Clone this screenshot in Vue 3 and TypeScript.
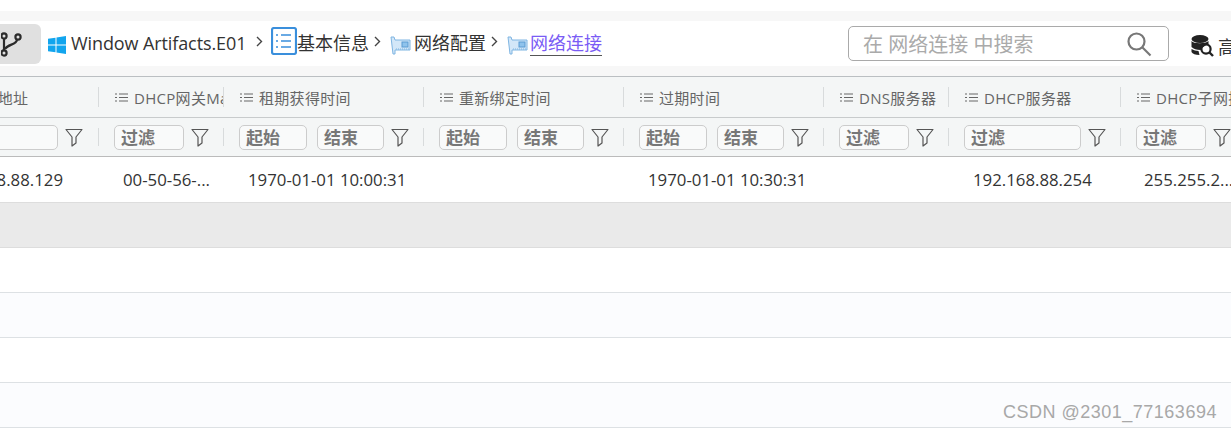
<script setup lang="ts">
type Col = { title: string; width: number; filter: 'text' | 'range' | 'wide'; value: string; pad: number; }

// first column runs off the left edge, the page is scrolled sideways
const columns: Col[] = [
  { title: 'IP地址', width: 198, filter: 'text', value: '192.168.88.129', pad: 0 },
  { title: 'DHCP网关Mac地址', width: 125, filter: 'text', value: '00-50-56-...', pad: 25 },
  { title: '租期获得时间', width: 200, filter: 'range', value: '1970-01-01 10:00:31', pad: 25 },
  { title: '重新绑定时间', width: 200, filter: 'range', value: '', pad: 25 },
  { title: '过期时间', width: 200, filter: 'range', value: '1970-01-01 10:30:31', pad: 25 },
  { title: 'DNS服务器', width: 125, filter: 'text', value: '', pad: 25 },
  { title: 'DHCP服务器', width: 172, filter: 'wide', value: '192.168.88.254', pad: 25 },
  { title: 'DHCP子网掩码', width: 125, filter: 'text', value: '255.255.2...', pad: 24 },
]

const gridStyle = { gridTemplateColumns: columns.map((c) => `${c.width}px`).join(' ') }
const emptyRows = [1, 2, 3, 4, 5]
</script>

<template>
  <div class="page">
    <div class="top-space"></div>
    <div class="toolbar">
      <div class="branch-btn">
        <svg width="24" height="28" viewBox="0 0 24 28" fill="none" stroke="#2b2b2b" stroke-width="2.2">
          <circle cx="3" cy="6" r="2.6" />
          <circle cx="3" cy="23" r="2.6" />
          <circle cx="17" cy="7" r="2.6" />
          <path d="M3 9v11M16 10c-1 5-9 4-12 9" />
        </svg>
      </div>
      <svg class="win" width="18" height="18" viewBox="0 0 18 18" fill="#12a5ee">
        <path d="M0 2.8 7.5 1.7V8.5H0zM8.5 1.6 18 0V8.5H8.5zM0 9.500H7.5V16.3L0 15.2zM8.5 9.500H18V18L8.5 16.4z" />
      </svg>
      <span class="crumb latin">Window Artifacts.E01</span>
      <svg class="chev first-chev" width="7" height="11" viewBox="0 0 7 11" fill="none" stroke="#444" stroke-width="1.4">
        <path d="m1 1 4.500 4.500L1 10" />
      </svg>
      <svg class="list-icon" width="26" height="28" viewBox="0 0 26 28" fill="none" stroke="#3a8fdc">
        <rect x="1" y="1" width="24" height="26" rx="2" stroke-width="2.2" />
        <path d="M10 8h10M10 14h10M10 20h10M5 8h2M5 14h2M5 20h2" stroke-width="1.3" />
      </svg>
      <span class="crumb">基本信息</span>
      <svg class="chev" width="7" height="11" viewBox="0 0 7 11" fill="none" stroke="#444" stroke-width="1.4">
        <path d="m1 1 4.500 4.500L1 10" />
      </svg>
      <svg class="nic first" width="21" height="20" viewBox="0 0 21 20" fill="#d3e7f8" stroke="#7fb5e2">
        <path d="M1 2h3l1 3h15v10H5v4H3z" />
        <rect x="12" y="7" width="6" height="5" fill="#8fc3ec" stroke="#5b9bd2" />
        <path d="M6 14h13" stroke-dasharray="1 1" />
      </svg>
      <span class="crumb">网络配置</span>
      <svg class="chev" width="7" height="11" viewBox="0 0 7 11" fill="none" stroke="#444" stroke-width="1.4">
        <path d="m1 1 4.500 4.500L1 10" />
      </svg>
      <svg class="nic second" width="21" height="20" viewBox="0 0 21 20" fill="#d3e7f8" stroke="#7fb5e2">
        <path d="M1 2h3l1 3h15v10H5v4H3z" />
        <rect x="12" y="7" width="6" height="5" fill="#8fc3ec" stroke="#5b9bd2" />
        <path d="M6 14h13" stroke-dasharray="1 1" />
      </svg>
      <span class="crumb current">网络连接</span>

      <div class="search">
        <span class="placeholder">在 网络连接 中搜索</span>
        <svg width="26" height="26" viewBox="0 0 26 26" fill="none" stroke="#777" stroke-width="2.2">
          <circle cx="10.5" cy="10.5" r="8" />
          <path d="m16.5 16.5 8 8" />
        </svg>
      </div>
      <div class="advanced">
        <svg width="23" height="24" viewBox="0 0 23 24">
          <ellipse cx="9" cy="5" rx="8.5" ry="4" fill="#222" />
          <path d="M.5 7c2 3 14 3 17 0v3c-4 2-6 3-8 6-4 0-7-1-9-3zM.5 15c2 1 5 2 7 2l1 4c-4 0-7-1-8-3z" fill="#222" />
          <circle cx="15" cy="15" r="4.6" fill="none" stroke="#222" stroke-width="2.2" />
          <path d="m18 18 4 4" stroke="#222" stroke-width="2.4" />
        </svg>
        <span>高级搜索</span>
      </div>
    </div>
    <div class="bottom-space"></div>

    <div class="table-clip">
      <div class="table">
        <div class="grid head" :style="gridStyle">
          <div v-for="c in columns" :key="c.title" class="head-cell">
            <span class="sep"></span>
            <svg v-if="c.pad" class="menu" width="13" height="9" viewBox="0 0 13 9" stroke="#666" stroke-width="1.2">
              <path d="M0 1h2M4 1h9M0 4.500h2M4 4.500h9M0 8h2M4 8h9" />
            </svg>
            <span class="title" :class="{ first: !c.pad }">{{ c.title }}</span>
          </div>
        </div>
        <div class="grid filters" :style="gridStyle">
          <div v-for="c in columns" :key="c.title" class="filter-cell" :class="{ first: !c.pad }">
            <span class="sep"></span>
            <template v-if="c.filter === 'range'">
              <span class="input range">起始</span>
              <span class="input range second-input">结束</span>
            </template>
            <span v-else class="input" :class="{ wide: c.filter === 'wide' }">{{ c.pad ? '过滤' : '' }}</span>
            <svg class="funnel" width="18" height="19" viewBox="0 0 18 19" fill="none" stroke="#555" stroke-width="1.2">
              <path d="M1 1.500h16l-6 7.500v6l-4 3v-9z" stroke-linejoin="round" />
            </svg>
          </div>
        </div>
        <div class="grid row" :style="gridStyle">
          <div v-for="c in columns" :key="c.title" class="cell" :style="{ paddingLeft: `${c.pad}px` }" :class="{ right: !c.pad }">{{ c.value }}</div>
        </div>
        <div class="blank selected"></div>
        <div v-for="n in emptyRows" :key="n" class="blank" :class="{ tint: n % 2 === 0 }"></div>
      </div>
    </div>
    <div class="watermark">CSDN @2301_77163694</div>
  </div>
</template>

<style>
html, body { margin: 0; background: #fff; overflow: hidden; }
</style>

<style scoped>
.page {
  position: relative;
  width: 1231px;
  height: 431px;
  overflow: hidden;
  font-family: "Open Sans", "Noto Sans CJK SC", sans-serif;
  color: #333;
}
.top-space { height: 11px; background: #fff; }
.toolbar {
  height: 45px;
  border-top: 10px solid #f7f7f7;
  display: flex;
  align-items: center;
  font-size: 18px;
  background: #fff;
}
.toolbar > * { flex: none; }
.bottom-space { height: 10px; background: #f7f7f7; }
.branch-btn {
  width: 41px;
  height: 40px;
  background: #e0e0e0;
  border-radius: 0 6px 6px 0;
  display: flex;
  align-items: center;
  overflow: hidden;
}
.branch-btn svg { margin-left: 1px; }
.win { margin-left: 7px; margin-right: 5px; margin-top: 2px; }
.crumb { white-space: nowrap; line-height: 24px; padding-bottom: 2px; }
.latin { font-size: 18px; width: 177px; letter-spacing: -0.1px; }
.chev { margin-left: 5px; margin-top: -4px; }
.chev.first-chev { margin-left: 8px; }
.list-icon { margin-left: 8px; margin-top: -6px; }
.nic { margin-top: 3px; }
.nic.first { margin-left: 9px; margin-right: 3px; }
.nic.second { margin-left: 9px; margin-right: 2px; }
.crumb.current {
  color: #7a5cf5;
  border-bottom: 1px solid #555;
  line-height: 23px;
  padding-bottom: 0;
}
.search {
  margin-left: 246px;
  width: 321px;
  height: 35px;
  box-sizing: border-box;
  border: 1px solid #aaa;
  border-radius: 5px;
  display: flex;
  align-items: center;
  justify-content: space-between;
  padding: 0 16px 0 14px;
}
.placeholder { font-size: 20px; color: #aaa; white-space: nowrap; }
.advanced {
  margin-left: 22px;
  display: flex;
  align-items: center;
  gap: 4px;
  white-space: nowrap;
  margin-top: 5px;
}
.table-clip {
  overflow: hidden;
  border-top: 1px solid #bbbfc2;
}
.table { margin-left: -100px; width: 1400px; }
.grid { display: grid; }
.head, .filters { background: #f4f6f6; border-bottom: 1px solid #c8cbcc; }
.head { height: 40px; }
.filters { height: 38px; border-bottom-color: #bbb; }
.head-cell {
  position: relative;
  display: flex;
  align-items: center;
  padding: 1px 0 0 17px;
  font-size: 15px;
  color: #666;
  overflow: hidden;
  white-space: nowrap;
  letter-spacing: 0.3px;
}
.menu { margin-right: 6px; flex: none; }
.title.first { margin-left: 67px; }
.sep {
  position: absolute;
  left: 0;
  top: 10px;
  bottom: 10px;
  width: 1px;
  background: #d8dbdc;
}
.head-cell:first-child .sep, .filter-cell:first-child .sep { display: none; }
.filter-cell {
  position: relative;
  display: flex;
  align-items: center;
  padding-left: 16px;
}
.filter-cell.first { padding-left: 0; justify-content: flex-end; padding-right: 15px; }
.input {
  box-sizing: border-box;
  width: 70px;
  height: 25px;
  line-height: 23px;
  border: 1px solid #ccc;
  border-radius: 5px;
  background: #f9fafa;
  padding-left: 6px;
  font-size: 17px;
  font-weight: 700;
  color: #777;
  flex: none;
}
.input.range { width: 68px; }
.input.second-input { margin-left: 10px; width: 67px; }
.input.wide { width: 117px; }
.funnel { margin-left: 7px; flex: none; }
.cell {
  height: 45px;
  line-height: 45px;
  font-size: 16.800px;
  color: #333;
  white-space: nowrap;
  overflow: hidden;
  box-sizing: border-box;
  background: #fff;
}
.cell.right { text-align: right; padding-right: 35px; }
.row { border-bottom: 1px solid #ddd; height: 45px; }
.blank {
  height: 44px;
  background: #fff;
  border-bottom: 1px solid #dde1e4;
}
.blank.selected { background: #eaeaea; border-bottom-color: #ddd; }
.blank.tint { background: #fbfcfe; }
.watermark {
  position: absolute;
  left: 1003px;
  top: 402px;
  font-family: "Liberation Sans", sans-serif;
  font-size: 18px;
  letter-spacing: 0.5px;
  color: #a8a8a8;
  white-space: nowrap;
}
</style>
